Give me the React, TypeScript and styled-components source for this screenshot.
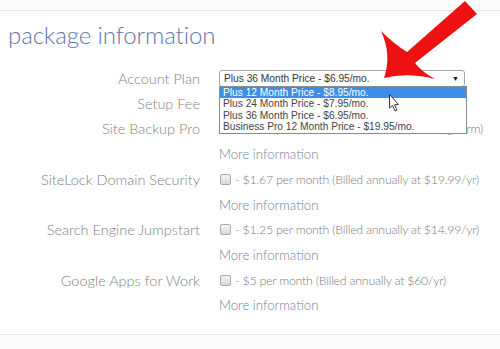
import styled, { createGlobalStyle } from 'styled-components';

const GlobalStyle = createGlobalStyle`
  html, body {
    margin: 0;
    padding: 0;
    background: #ffffff;
  }
  body {
    width: 500px;
    height: 349px;
    overflow: hidden;
    font-family: Lato, "Open Sans", sans-serif;
  }
`

const Page = styled.div`
  position: relative;
  width: 500px;
  height: 349px;
  padding-top: 10px;
  box-sizing: border-box;
  background: #fcfcfa;
`

const Panel = styled.section`
  background: #ffffff;
  border-top: 1px solid #e4e8ec;
  border-bottom: 1px solid #e4e8ec;
  padding: 8px 0 16px;
`

const Heading = styled.h2`
  margin: 0 0 0 8px;
  height: 47px;
  font-family: Lato, sans-serif;
  font-weight: 300;
  font-size: 24px;
  line-height: 32px;
  color: #5d78aa;
  letter-spacing: -0.1px;
`

const Form = styled.div`
  display: grid;
  grid-template-columns: 200px 1fr;
  column-gap: 19px;
  grid-auto-rows: 25.2px;
  align-items: center;
`

const Label = styled.div`
  text-align: right;
  font-family: Lato, sans-serif;
  font-weight: 300;
  font-size: 14.5px;
  color: #828282;
  white-space: nowrap;
`

const Control = styled.div`
  position: relative;
  font-family: Lato, sans-serif;
  font-weight: 300;
  font-size: 12.4px;
  letter-spacing: -0.25px;
  color: #7c7c7c;
  white-space: nowrap;
  display: flex;
  align-items: center;
`

const MoreLink = styled.a`
  font-family: Lato, sans-serif;
  font-weight: 300;
  font-size: 13.2px;
  color: #6f7f9c;
  text-decoration: none;
  white-space: nowrap;
`

const Check = styled.span`
  display: inline-block;
  width: 9px;
  height: 9px;
  border: 1px solid #a9a9a9;
  border-radius: 2px;
  background: linear-gradient(#f4f4f4, #d8d8d8);
  margin: 0 4px 0 1px;
`

const Select = styled.div`
  position: relative;
  width: 246px;
  height: 17px;
  box-sizing: border-box;
  border: 1px solid #a6a6a6;
  border-radius: 3px;
  background: #fff;
  font-family: "Liberation Sans", Arial, sans-serif;
  font-size: 10.2px;
  letter-spacing: 0;
  color: #333;
  padding: 0 0 0 4px;
  line-height: 15px;
  margin-top: -1px;
`

const Caret = styled.span`
  position: absolute;
  right: 5px;
  top: 0;
  font-size: 7px;
  color: #111;
`

const OptionList = styled.ul`
  position: absolute;
  left: -1px;
  top: 15px;
  width: 248px;
  margin: 0;
  padding: 0;
  list-style: none;
  background: #fff;
  border: 1px solid #8a8a8a;
  box-sizing: border-box;
  z-index: 2;
`

const Option = styled.li<{ $active?: boolean }>`
  height: 11.5px;
  line-height: 11.5px;
  padding-left: 3px;
  font-family: "Liberation Sans", Arial, sans-serif;
  font-size: 10.2px;
  background: ${p => (p.$active ? '#3c8ee8' : '#fff')};
  color: ${p => (p.$active ? '#fff' : '#444')};
`

const Overlay = styled.svg`
  position: absolute;
  left: 0;
  top: 0;
  pointer-events: none;
  z-index: 5;
`

const plans = [
  'Plus 12 Month Price - $8.95/mo.',
  'Plus 24 Month Price - $7.95/mo.',
  'Plus 36 Month Price - $6.95/mo.',
  'Business Pro 12 Month Price - $19.95/mo.',
]

const extras = [
  { name: 'SiteLock Domain Security', text: '- $1.67 per month (Billed annually at $19.99/yr)' },
  { name: 'Search Engine Jumpstart', text: '- $1.25 per month (Billed annually at $14.99/yr)' },
  { name: 'Google Apps for Work', text: '- $5 per month (Billed annually at $60/yr)' },
]

export default function App() {
  return (
    <Page>
      <GlobalStyle />
      <Panel>
        <Heading>package information</Heading>
        <Form>
          <Label>Account Plan</Label>
          <Control>
            <Select>
              Plus 36 Month Price - $6.95/mo.
              <Caret>▼</Caret>
              <OptionList>
                {plans.map((p, i) => (
                  <Option key={p} $active={i === 0}>{p}</Option>
                ))}
              </OptionList>
            </Select>
          </Control>

          <Label>Setup Fee</Label>
          <Control>Free!</Control>

          <Label>Site Backup Pro</Label>
          <Control><Check />- $2.99 per month (Billed over entire billing term)</Control>
          <span />
          <MoreLink href="#">More information</MoreLink>

          {extras.map(e => (
            <>
              <Label key={e.name}>{e.name}</Label>
              <Control><Check />{e.text}</Control>
              <span />
              <MoreLink href="#">More information</MoreLink>
            </>
          ))}
        </Form>
      </Panel>

      <Overlay width="500" height="349" viewBox="0 0 500 349">
        <path
          d="M384 78 Q392 55 381 31 Q394 44 407 52 L465 1 L477 14 L415 63 Q422 72 435 79 Q408 72 384 78 Z"
          fill="#ee1111"
        />
        <path
          d="M389.5 94.5 L389.5 108 L392.5 105.5 L395 111 L397 110 L394.5 104.8 L398.5 104.5 Z"
          fill="#fff"
          stroke="#222"
          strokeWidth="0.9"
          strokeLinejoin="round"
        />
      </Overlay>
    </Page>
  )
}
